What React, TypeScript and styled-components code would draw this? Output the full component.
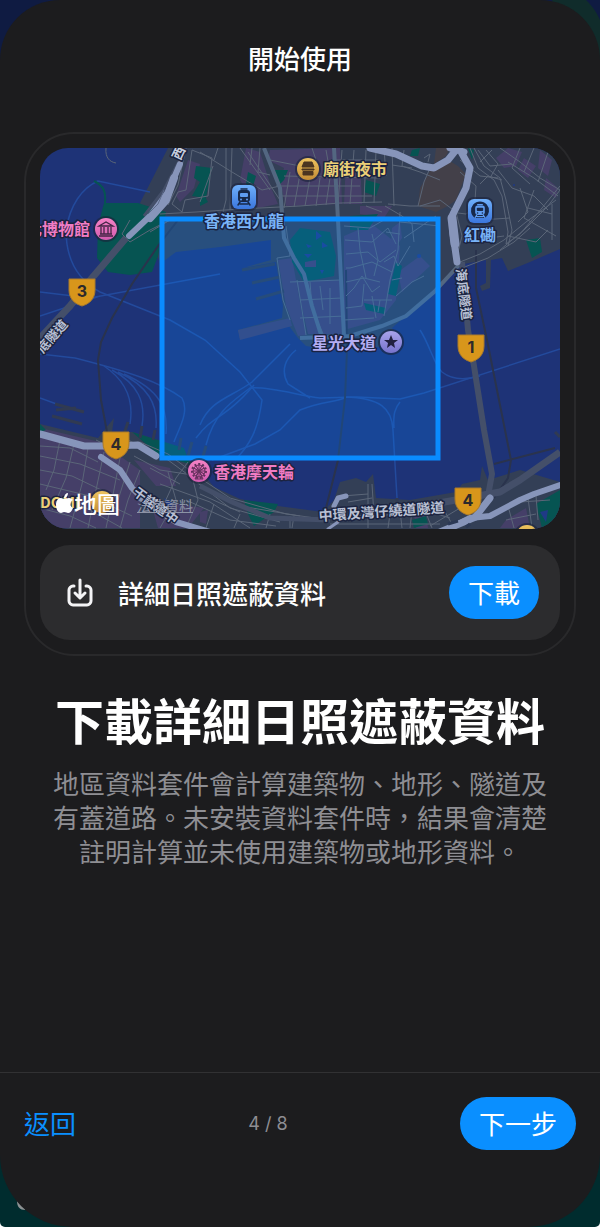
/**
 * Onboarding sheet, step which offers the detailed sunlight occlusion data
 */
import React from 'react'
import styled, { createGlobalStyle } from 'styled-components'

const GlobalStyle = createGlobalStyle`
	* {
		box-sizing: border-box;
	}
	body {
		margin: 0;
		background: #ffffff;
		font-family: 'Noto Sans CJK TC', 'Inter', sans-serif;
		color: #ffffff;
	}
	button {
		font-family: inherit;
		cursor: pointer;
	}
`
const Backdrop = styled.div`
	position: relative;
	min-height: 100vh;
	border-radius: 0 0 5px 5px;
	overflow: hidden;
	background: linear-gradient(#0f1b42 0, #0f1b42 50%, #002c2e 60%);
`
const BackdropShapes = styled.svg<{ bottom?: boolean }>`
	position: absolute;
	${(props) => (props.bottom ? 'left: 0; bottom: 0;' : 'right: 0; top: 0;')}
	width: 60px;
	height: 60px;
`
const Sheet = styled.main`
	position: relative;
	display: flex;
	flex-direction: column;
	min-height: 100vh;
	border-radius: 60px 60px 72px 72px;
	background: #1c1c1e;
`
const Header = styled.header`
	display: flex;
	align-items: center;
	justify-content: center;
	height: 116px;
`
const HeaderTitle = styled.h1`
	margin: 0;
	font-size: 26px;
	line-height: 36px;
	font-weight: 500;
`
const Content = styled.section`
	flex: 1 1 auto;
	padding: 16px 24px;
`
const Card = styled.div`
	display: flex;
	flex-direction: column;
	gap: 16px;
	padding: 14px;
	border: 2px solid #29292b;
	border-radius: 50px;
`
const MapFrame = styled.div`
	position: relative;
	border-radius: 28px;
	overflow: hidden;
`
const MapDrawing = styled.svg`
	display: block;
	width: 100%;
	height: auto;
`
const Attribution = styled.div`
	position: absolute;
	left: 15px;
	bottom: 10px;
	display: flex;
	align-items: center;
	gap: 17px;
`
const Brand = styled.span`
	display: flex;
	align-items: center;
	font-size: 23px;
	line-height: 32px;
	font-weight: 500;
`
const LegalLink = styled.a`
	padding-top: 4px;
	font-size: 14px;
	line-height: 20px;
	color: #8c93a6;
	text-decoration: underline;
`
const PackageRow = styled.div`
	display: flex;
	align-items: center;
	height: 95px;
	padding: 0 21px 0 24px;
	border-radius: 30px;
	background: #2c2c2e;
`
const PackageName = styled.span`
	flex: 1 1 auto;
	padding-left: 22px;
	font-size: 26px;
	line-height: 36px;
	font-weight: 500;
`
const PillButton = styled.button`
	height: 53px;
	padding: 0 19px 2px;
	border: none;
	border-radius: 27px;
	background: #0a8fff;
	color: #ffffff;
	font-size: 26px;
	line-height: 36px;
`
const Headline = styled.h2`
	margin: 27px 0 0;
	text-align: center;
	font-size: 49px;
	line-height: 72px;
	font-weight: 700;
`
const Description = styled.p`
	max-width: 500px;
	margin: 11px auto 0;
	text-align: center;
	font-size: 26px;
	line-height: 34px;
	color: #8e8e93;
`
const Footer = styled.footer`
	display: flex;
	align-items: flex-start;
	justify-content: space-between;
	height: 155px;
	padding: 24px 24px 0;
	border-top: 1px solid #313133;
`
const BackButton = styled.button`
	height: 53px;
	padding: 0 0 2px;
	border: none;
	background: none;
	color: #0a8fff;
	font-size: 26px;
`
const StepCount = styled.span`
	font-family: 'Inter', sans-serif;
	font-size: 18px;
	line-height: 53px;
	color: #8e8e93;
`

const minorRoads = [
	// West Kowloon
	'M226 148V200L222 216M232 148L230 210M200 152L232 172L262 190L280 186M240 148L270 190M248 152L280 200L284 240',
	'M186 148L178 185L168 205M192 150L212 158L208 196L185 200L182 212L172 204L178 192L186 190Z',
	'M160 214L196 212L240 209L300 206L340 203L382 202M150 232L170 220',
	'M213 166L200 202M218 148L214 160M260 148L258 172L270 175M252 148L250 165M270 160L300 166',
	// Yau Ma Tei
	'M290 172L284 208M300 174L294 207M310 178L305 206M320 178L316 206M330 178L326 205M342 150L338 204M354 150L350 204M366 150L364 203M376 150L374 203',
	'M276 186H360M280 196H372M284 176L380 178M330 160H380M326 150L330 172M345 168H380',
	'M312 148L318 166M386 176L384 148M392 148L394 206M404 150L402 166L420 172L440 180M392 165L412 168',
	// Tsim Sha Tsui
	'M277 258L290 256L286 226M277 258L283 300L290 320M297 280L302 310L306 335M310 282L312 308L324 336M320 286L323 310M330 288L330 324M290 282L340 280M300 300L342 298M300 318L345 316',
	'M344 226L370 228L384 220M345 240L372 242L388 228L396 244M346 254L368 252L380 262L396 250M346 268L350 268L372 262L392 272M346 282L364 278L380 282M346 296L354 288L362 276L372 292L380 286M346 308L362 306L364 284M358 228L360 250L366 278M372 234L378 260L374 276M386 232L400 234M344 320L374 318M364 300H392M372 296L376 318M380 300L378 312',
	'M384 262L394 256L398 266L410 246M392 280L402 278M396 296L412 282L424 276M400 212L398 250L390 280L384 316',
	'M385 206L402 216L412 224L414 242M366 206L382 212M388 204L410 206L440 206M400 222L440 226M404 238L436 216',
	// Hung Hom
	'M420 206L440 200L456 212L462 236L456 260M418 206L424 182L430 168M450 212L466 214L478 206',
	'M470 148L478 168L494 180L502 196L508 232L506 244M474 148L484 166L500 178L506 200L512 230L508 246M478 150L490 166L512 164M486 150L498 164L490 178M480 162L492 150',
	'M506 244L520 234L542 208L560 186M500 250L524 230L548 206L560 190M460 262L480 254L504 240L526 222L556 200M462 268L488 258L514 242L530 228',
	'M500 148L520 162L540 178L560 190M508 162L534 178L558 196M520 148L512 168L530 184M534 148L524 172M548 152L538 182M498 170L512 188L534 196L548 210',
	'M460 160L480 176L498 178M460 172L476 186L474 214M480 220L510 218M474 240L504 236M520 188L528 212L518 222M534 190L524 218L556 236M508 236L536 242L548 230M552 204L552 240M528 208L552 214',
	'M424 158L430 154L428 162M480 184L488 176L502 180',
	// Central
	'M40 446L70 448L98 462M40 456L80 464L120 480M40 470L72 476L118 498M60 440L54 470L46 490M74 444L66 478L52 510M88 448L82 484L70 528M104 452L96 490L88 528M120 458L112 500L106 528',
	'M40 484L90 496L132 516M44 498L86 508L122 528M130 462L118 500M140 470L128 500L120 528M40 508L70 516L96 528M96 440L108 446L140 442L168 454L200 478L230 498L286 514L330 520',
	'M134 456L160 470L186 474L230 508L280 522M160 484L210 502L250 528M168 472L176 500L160 528M188 462L176 478L164 504M192 476L198 500L186 528M150 468L180 484M128 440L168 460L206 488L240 506L300 516',
	'M186 500L230 520L276 526M214 504L206 528M240 514L234 528M270 514L266 528M290 516V528M294 516L292 528M200 494L240 512',
	// Wan Chai
	'M330 516H372L430 512L450 518M342 496L368 494M368 484V528M372 484L374 516M348 502L372 498M390 514L388 528M400 510L402 528M412 510L410 528M424 508L432 528M330 524H440M444 510L452 524M430 526L460 508',
	'M508 506L514 528M528 498L532 528M536 496L538 520M520 502L550 500M506 520L536 514',
]

const arterials = [
	'M334 148L338 220L341 280L344 336',
	'M264 148L280 188L284 238L294 258L304 274L312 306L322 338',
	'M300 338L350 336L382 326L406 316L434 292L460 264',
]

const ferryLines = [
	'M66 230C70 205 82 188 98 181L150 192M66 230C66 260 78 280 100 292L170 320L205 340L240 372L262 400C258 430 250 445 235 460',
	'M40 292L90 298L220 274M40 316L100 296M40 354L75 358C130 372 160 382 182 398C190 412 178 430 174 442',
	'M104 366C125 380 134 400 130 424M112 370C138 384 146 402 142 426M118 372C148 386 158 404 156 428M124 374C160 390 168 408 166 434M40 398L62 406',
	'M200 425C210 400 230 398 252 382L290 344M206 445C215 410 235 400 250 388C270 386 300 396 320 398L356 397L400 399L424 393L560 349',
	'M196 438C214 414 224 420 254 385M212 460L255 444L280 430L300 410C320 402 335 402 345 398M296 350C286 358 280 370 288 384L310 398',
	'M345 397C380 398 392 408 393 430L397 498M400 402C395 408 393 414 394 428',
	'M420 330C430 345 434 365 442 372C452 380 466 380 480 376',
]

const purpleBlocks = [
	'M188 160L200 164L194 188L180 202L176 196Z',
	'M270 150L340 148L342 204L286 206L280 182L284 168L268 160Z',
	'M346 160L360 160L362 204L344 204ZM360 206L392 206L384 218L360 214Z',
	'M246 148L260 152L272 190L278 204L258 208L240 180Z',
	'M278 260L292 258L306 335L298 336L286 306Z',
	'M296 282L340 280L342 334L308 334Z',
	'M344 236L372 224L400 246L396 300L380 320L344 330Z',
	'M398 272L420 256L430 266L402 292ZM392 228L400 222L402 238L390 256Z',
	'M496 158L508 148L522 152L516 166L504 168ZM524 158L536 166L528 178L518 170ZM540 150L552 160L548 176L538 168ZM546 178L558 188L556 198L544 190Z',
	'M40 428L100 442L140 470L140 528H40Z',
	'M134 460L170 468L176 486L156 486ZM150 500L204 508L188 528L158 528ZM506 520L526 508L530 528H500ZM414 514L426 512L428 528H416Z',
	'M200 512L208 510L206 524L200 522Z',
]

const parks = [
	'M104 203L138 203L166 212L162 234L158 256L152 272L130 275L108 272L97 258L98 226Z',
	'M196 166L212 168L206 198L192 196L200 182L194 178ZM248 172L256 176L252 190L246 184Z',
	'M274 170L288 170L284 180L278 186ZM366 180L380 184L376 196L364 192ZM200 188L208 202L200 206Z',
	'M300 228L330 232L336 256L334 276L304 282L292 262L290 240ZM350 216L378 214L368 230L350 230Z',
	'M364 303L386 308L384 314L366 310ZM396 262L402 266L396 296L388 294Z',
	'M412 150L420 148L418 156L410 156ZM468 148L474 150L472 160ZM526 240L540 238L542 252L532 258Z',
	'M132 432L184 448L190 464L160 456ZM244 500L278 504L274 512L254 526L248 514Z',
	'M536 504L560 490V528H542ZM412 520L426 516L428 524L414 528ZM40 424L46 430L40 432Z',
]

interface IPinProps {
	x: number
	y: number
	tone: string
	children?: React.ReactNode
}

/**
 * Round point of interest marker, the glyph is drawn round its centre
 */
const Pin = ({ x, y, tone, children }: IPinProps) => (
	<g transform={`translate(${x} ${y})`}>
		<circle r="13" fill="#1b2138" opacity="0.6" />
		<circle r="11" fill={`url(#${tone})`} />
		{children}
	</g>
)

/**
 * Highway shield with its route number
 */
const Shield = ({ x, y, route }: { x: number; y: number; route: string }) => (
	<g transform={`translate(${x} ${y})`}>
		<path
			d="M-13 -13H13V-2C13 7 7 12 0 14C-7 12 -13 7 -13 -2Z"
			fill="#d8961b"
			stroke="#a97a2c"
			strokeWidth="1"
		/>
		<text
			y="5"
			textAnchor="middle"
			fontFamily="Inter, sans-serif"
			fontSize="16"
			fontWeight="700"
			fill="#2d2a2b"
		>
			{route}
		</text>
	</g>
)

const Label = ({ x, y, color, size = 16, rotate = 0, children }: any) => (
	<text
		transform={`translate(${x} ${y}) rotate(${rotate})`}
		fontSize={size}
		fontWeight="700"
		fill={color}
		stroke="#1b2340"
		strokeWidth="3"
		strokeLinejoin="round"
		paintOrder="stroke"
	>
		{children}
	</text>
)

const TrainGlyph = ({ color, detail }: { color: string; detail: string }) => (
	<g strokeLinecap="round">
		<path
			d="M-3 -8H3M-4 5L-6 8M4 5L6 8M-4 7H4"
			fill="none"
			stroke={color}
			strokeWidth="1.5"
		/>
		<rect x="-6" y="-7" width="12" height="12" rx="3" fill={color} />
		<rect x="-4" y="-4" width="8" height="4" rx="1" fill={detail} />
		<circle cx="-3" cy="2.500" r="1" fill={detail} />
		<circle cx="3" cy="2.500" r="1" fill={detail} />
	</g>
)

const spokes = [0, 30, 60, 90, 120, 150]

const HarbourMap = () => (
	<MapDrawing viewBox="40 148 520 381">
		<defs>
			<linearGradient id="pink" x2="0" y2="1">
				<stop offset="0" stopColor="#f482c5" />
				<stop offset="1" stopColor="#d25cb0" />
			</linearGradient>
			<linearGradient id="gold" x2="0" y2="1">
				<stop offset="0" stopColor="#edc35f" />
				<stop offset="1" stopColor="#c28c35" />
			</linearGradient>
			<linearGradient id="violet" x2="0" y2="1">
				<stop offset="0" stopColor="#a9a3ea" />
				<stop offset="1" stopColor="#7773cc" />
			</linearGradient>
			<linearGradient id="station" x2="0" y2="1">
				<stop offset="0" stopColor="#6fb0fb" />
				<stop offset="1" stopColor="#3b76dd" />
			</linearGradient>
		</defs>
		<path d="M40 148H560V529H40Z" fill="#1e3377" />
		<g fill="#333f56">
			<path d="M168 148H560V249L530 262L508 271L502 258L491 260L490 288L482 291L480 286L486 283V260L458 265L440 285L410 312L392 328L400 343L372 348L326 349L306 346L298 338L286 322L240 339L238 330L282 318L283 306L276 262L243 268L271 260V240L220 247L176 252L160 264L140 203Z" />
			<path d="M40 424L98 438L114 418L112 432L133 432L164 442L184 455L200 470L214 487L240 499L278 506L323 512L334 500L340 482L356 478L366 482L373 474L376 498L410 500L456 492L462 484L480 480L482 466L488 480L520 470L560 482V529H40Z" />
		</g>
		<path
			d="M420 188L432 168L448 160L458 166L466 174L456 200L448 206L436 212L418 206ZM436 148H450L446 156L434 164Z"
			fill="#434049"
		/>
		<g fill="#453f68">
			{purpleBlocks.map((d) => (
				<path key={d} d={d} />
			))}
		</g>
		<g fill="#065452">
			{parks.map((d) => (
				<path key={d} d={d} />
			))}
		</g>
		<g fill="#1f3a86">
			<path d="M316 231L322 236L316 240ZM322 242L328 246L322 248ZM306 244L312 246L308 248ZM304 254L312 254L308 258ZM320 270L324 270L322 274Z" />
			<path d="M164 498L174 504L168 508ZM172 520L180 520L176 526ZM540 512L548 510L546 522Z" />
			<circle cx="514" cy="185" r="1" />
			<circle cx="419" cy="256" r="2" />
		</g>
		<path d="M305 262L316 260V267H305Z" fill="#453f68" />
		<g fill="none" stroke="#234a9c" strokeWidth="1.5">
			{ferryLines.map((d) => (
				<path key={d} d={d} />
			))}
		</g>
		<g fill="none" stroke="#303a52" strokeWidth="3">
			<path d="M242 270L275 264M252 283L280 277M256 299L284 291M55 404L84 412M52 416L82 424M56 410L76 408" />
			<path d="M128 422L124 434M142 426L140 438M155 430L153 440M181 438L179 450M192 442L188 456M206 446L202 460M397 498V510" />
			<path d="M555 432L560 437" />
		</g>
		<path d="M238 330L290 318L292 326L240 340Z" fill="#403f6b" />
		<g fill="none" stroke="#2a334d" strokeWidth="2">
			<path d="M178 220L158 246L132 284L112 318L101 342L98 360L101 400L107 432" />
			<path d="M346 270L347 350L345 398L338 460L326 508M476 250V288L488 345L511 460L508 478L494 498M494 464L555 448" />
		</g>
		<g fill="none" stroke="#5b6678" strokeWidth="1">
			{minorRoads.map((d) => (
				<path key={d} d={d} />
			))}
			<path d="M106 148C105 158 110 162 116 163M130 220L122 234L130 242L150 230L170 220" />
		</g>
		<path
			d="M94 181C104 186 106 192 105 203"
			fill="none"
			stroke="#065452"
			strokeWidth="2"
		/>
		<g fill="none" stroke="#536781" strokeWidth="4">
			{arterials.map((d) => (
				<path key={d} d={d} />
			))}
		</g>
		<g fill="none" stroke="#444f69" strokeLinejoin="round">
			<path d="M186 148L164 190L144 216" strokeWidth="3" />
			<path d="M126 238L92 278L70 306L40 338" strokeWidth="7" />
			<path d="M462 262L468 330L474 366L484 430L492 474L488 496" strokeWidth="6" />
			<path d="M410 508L456 500L500 492L520 480L560 452" strokeWidth="7" />
			<path d="M200 486L232 502L270 518L330 520" strokeWidth="5" />
		</g>
		<g fill="none" stroke="#8795ba" strokeLinejoin="round" strokeLinecap="round">
			<path d="M180 164L168 192L150 216L129 236" strokeWidth="6" />
			<path d="M174 178L166 200L150 218" strokeWidth="8" />
			<path d="M370 148L396 154L422 166L434 168L448 160L456 150" strokeWidth="7" />
			<path d="M450 148L464 152M460 150L470 168L466 188L452 216L453 234L457 262" strokeWidth="7" />
			<path d="M452 218L455 244" strokeWidth="9" />
			<path d="M40 434L84 446L112 446L138 445L156 456" strokeWidth="7" />
			<path d="M101 457L120 470L132 488L148 504L176 522L210 532" strokeWidth="6" />
			<path d="M334 506L338 498L346 496" strokeWidth="5" />
			<path d="M448 529L470 518L490 516L520 500L534 494L560 485" strokeWidth="6" />
			<path d="M476 516L490 498M440 532L478 516" strokeWidth="7" />
			<path d="M328 529L338 522" strokeWidth="3" />
		</g>
		<path
			d="M164 190L158 204L148 214"
			stroke="#5d6b8b"
			strokeWidth="1"
			fill="none"
		/>
		<path
			d="M448 524L458 521M466 527L470 524"
			stroke="#2c3956"
			strokeWidth="3"
		/>
		<rect
			x="162"
			y="219"
			width="276"
			height="239"
			fill="#0a84ff"
			fillOpacity="0.24"
			stroke="#0a8cff"
			strokeWidth="5"
		/>

		<Label x="180" y="161" color="#c8cede" size="13" rotate={-64}>
			西
		</Label>
		<Label x="43" y="354" color="#b9c0d4" size="13" rotate={-49}>
			底隧道
		</Label>
		<Label x="456" y="269" color="#b9c0d4" size="13" rotate={83}>
			海底隧道
		</Label>
		<Label x="132" y="494" color="#b9c0d4" size="13" rotate={36}>
			干諾道中
		</Label>
		<Label x="319" y="521" color="#b9c0d4" size="14" rotate={-4}>
			中環及灣仔繞道隧道
		</Label>

		<Label x="26" y="235" color="#f07cc4">
			化博物館
		</Label>
		<Pin x={106} y={229} tone="pink">
			<path
				d="M-7 -3L0 -7L7 -3ZM-6 5H6M-7 7H7M-5 -2V5M-2 -2V5M2 -2V5M5 -2V5"
				fill="none"
				stroke="#442545"
				strokeWidth="1.3"
			/>
		</Pin>
		<Label x="323" y="175" color="#ecd078">
			廟街夜市
		</Label>
		<Pin x={308} y={169} tone="gold">
			<path
				d="M-4 -7H4L6 -2H-6ZM-6 0H6V1H-6ZM-5 2.500H5V6H-5Z"
				fill="#4b3520"
				stroke="#4b3520"
				strokeLinejoin="round"
			/>
		</Pin>
		<g transform="translate(244 197)">
			<rect x="-14" y="-14" width="28" height="28" rx="8" fill="#1b2340" opacity="0.6" />
			<rect x="-12" y="-12" width="24" height="24" rx="6" fill="url(#station)" />
			<TrainGlyph color="#17284a" detail="#5f9cf0" />
		</g>
		<Label x="204" y="227" color="#79b4f8">
			香港西九龍
		</Label>
		<g transform="translate(480 211)">
			<rect x="-14" y="-14" width="28" height="28" rx="8" fill="#1b2340" opacity="0.6" />
			<rect x="-12" y="-12" width="24" height="24" rx="6" fill="url(#station)" />
			<path d="M-5 7A9 9 0 1 1 5 7Z" fill="#17284a" />
			<g transform="scale(0.8)">
				<TrainGlyph color="#5f9cf0" detail="#17284a" />
			</g>
		</g>
		<Label x="464" y="241" color="#79b4f8">
			紅磡
		</Label>
		<Label x="312" y="349" color="#b3adf2">
			星光大道
		</Label>
		<Pin x={391} y={342} tone="violet">
			<path
				d="M0 -7L2 -2L7 -2L3 1L4 6L0 3L-4 6L-3 1L-7 -2L-2 -2Z"
				fill="#22203f"
			/>
		</Pin>
		<Label x="214" y="478" color="#f07cc4">
			香港摩天輪
		</Label>
		<Pin x={199} y={471} tone="pink">
			<g fill="none" stroke="#63305c" strokeWidth="1">
				<circle r="6" />
				<circle r="7" strokeWidth="2" strokeDasharray="2 2" />
				{spokes.map((angle) => (
					<path key={angle} d="M-6 0H6" transform={`rotate(${angle})`} />
				))}
				<path d="M0 0L-4 8H4Z" />
			</g>
		</Pin>
		<Label x="40" y="508" color="#ecd078" size="15">
			DOMI
		</Label>
		<Pin x={102} y={502} tone="gold" />
		<Pin x={527} y={536} tone="gold" />

		<Shield x={82} y={292} route="3" />
		<Shield x={116} y={445} route="4" />
		<Shield x={471} y={348} route="1" />
		<Shield x={468} y={501} route="4" />
	</MapDrawing>
)

const AppleLogo = () => (
	<svg width="19" height="22" viewBox="0 0 19 22" fill="#ffffff" aria-hidden="true">
		<path d="M13 1C13 4 11 6 9 6C9 3 11 1 13 1Z" />
		<path d="M9 7C10 7 12 6 14 6C16 6 17 7 18 8C14 10 15 15 18 16C17 19 15 21 13 21C12 21 11 20 9 20C8 20 7 21 6 21C3 21 1 17 1 13C1 9 3 6 6 6C7 6 8 7 9 7Z" />
	</svg>
)

const DownloadIcon = () => (
	<svg
		width="32"
		height="32"
		viewBox="0 0 32 32"
		fill="none"
		stroke="#f4f4f6"
		strokeWidth="3"
		strokeLinecap="round"
		strokeLinejoin="round"
		aria-hidden="true"
	>
		<path d="M10 9H9C7 9 5 11 5 13V24C5 26 7 28 9 28H23C25 28 27 26 27 24V13C27 11 25 9 23 9H22" />
		<path d="M16 3V20M11 16L16 21L21 16" />
	</svg>
)

const App = () => (
	<>
		<GlobalStyle />
		<Backdrop>
			<BackdropShapes viewBox="0 0 60 60" aria-hidden="true">
				<path d="M12 0H46C53 7 57 13 60 20V60H40Z" fill="#102c2b" />
			</BackdropShapes>
			<BackdropShapes bottom viewBox="0 0 60 60" aria-hidden="true">
				<path d="M17 34C17 40 20 43 25 43L30 36Z" fill="#8d9294" />
			</BackdropShapes>
			<Sheet>
				<Header>
					<HeaderTitle>開始使用</HeaderTitle>
				</Header>
				<Content>
					<Card>
						<MapFrame>
							<HarbourMap />
							<Attribution>
								<Brand>
									<AppleLogo />
									地圖
								</Brand>
								<LegalLink href="#legal">法律資料</LegalLink>
							</Attribution>
						</MapFrame>
						<PackageRow>
							<DownloadIcon />
							<PackageName>詳細日照遮蔽資料</PackageName>
							<PillButton type="button">下載</PillButton>
						</PackageRow>
					</Card>
					<Headline>下載詳細日照遮蔽資料</Headline>
					<Description>
						地區資料套件會計算建築物、地形、隧道及有蓋道路。未安裝資料套件時，結果會清楚註明計算並未使用建築物或地形資料。
					</Description>
				</Content>
				<Footer>
					<BackButton type="button">返回</BackButton>
					<StepCount>4 / 8</StepCount>
					<PillButton type="button">下一步</PillButton>
				</Footer>
			</Sheet>
		</Backdrop>
	</>
)

export default App
